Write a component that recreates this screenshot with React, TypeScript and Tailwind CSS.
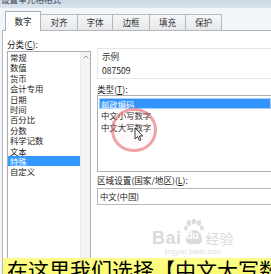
import React from "react";

const font = "font-['Noto_Sans_CJK_SC','Liberation_Sans',sans-serif]";

const categories = [
  "常规",
  "数值",
  "货币",
  "会计专用",
  "日期",
  "时间",
  "百分比",
  "分数",
  "科学记数",
  "文本",
  "特殊",
  "自定义",
];

const tabs = [
  { label: "数字", w: "w-[36px]" },
  { label: "对齐", w: "w-[38px]" },
  { label: "字体", w: "w-[36px]" },
  { label: "边框", w: "w-[38px]" },
  { label: "填充", w: "w-[37px]" },
  { label: "保护", w: "w-[37px]" },
];

function Tabs() {
  return (
    <div className="flex items-end h-[22px] pl-[5px] relative z-10">
      {tabs.map((t, i) =>
        i === 0 ? (
          <div
            key={t.label}
            className={`${t.w} h-[20px] -mb-px bg-white border border-b-0 border-[#a9b0b8] flex items-center justify-center text-[8.6px] text-[#222] pb-[1px]`}
          >
            {t.label}
          </div>
        ) : (
          <div
            key={t.label}
            className={`${t.w} -ml-px h-[16px] bg-gradient-to-b from-[#f6f7f8] to-[#e6e8ea] border border-b-0 border-[#b4b9bf] flex items-center justify-center text-[8.6px] text-[#333]`}
          >
            {t.label}
          </div>
        )
      )}
    </div>
  );
}

function Scrollbar() {
  return (
    <div className="w-[10px] bg-[#f4f4f4] border-l border-[#ececec] flex flex-col items-center justify-between py-[3px]">
      <svg width="6" height="4" viewBox="0 0 6 4">
        <path d="M0.5 3.5 L3 1 L5.5 3.5" fill="none" stroke="#9a9a9a" strokeWidth="1" />
      </svg>
      <svg width="6" height="4" viewBox="0 0 6 4">
        <path d="M0.5 0.5 L3 3 L5.5 0.5" fill="none" stroke="#9a9a9a" strokeWidth="1" />
      </svg>
    </div>
  );
}

export default function App() {
  return (
    <div className={`relative w-[271px] h-[274px] overflow-hidden bg-[#f2f5f9] ${font}`}>
      {/* title bar */}
      <div className="h-[8px] bg-gradient-to-b from-[#cdd8e5] to-[#dbe3ed] overflow-hidden">
        <div className="text-[8.6px] leading-[9px] -mt-[5px] pl-[1px] text-[#3b4656]">设置单元格格式</div>
      </div>

      <Tabs />

      {/* panel */}
      <div className="ml-[2px] h-[260px] bg-white border-l border-t border-[#b3b8be] flex">
        {/* left column */}
        <div className="pl-[4px] w-[88px] flex flex-col">
          <div className="mt-[8px] h-[10px] text-[8.6px] leading-[10px] text-[#222]">
            分类(<span className="underline">C</span>):
          </div>
          <div className="mt-[2px] h-[230px] border border-[#a9adb3] flex">
            <div className="flex-1 flex flex-col">
              {categories.map((c) => (
                <div
                  key={c}
                  className={`h-[10.4px] leading-[10.4px] text-[8.4px] pl-[2px] whitespace-nowrap ${
                    c === "特殊" ? "bg-[#3399ff] text-white" : "text-[#1e1e1e]"
                  }`}
                >
                  {c}
                </div>
              ))}
            </div>
            <Scrollbar />
          </div>
        </div>

        {/* right column */}
        <div className="ml-[6px] flex-1 flex flex-col">
          <div className="mt-[17px] h-[31px] border border-r-0 border-[#e6e6e6] pl-[4px] pt-[2px]">
            <div className="text-[8.6px] leading-[10px] text-[#333]">示例</div>
            <div className="mt-[4px] text-[8.6px] leading-[10px] text-[#222]">087509</div>
          </div>
          <div className="mt-[5px] text-[8.6px] leading-[10px] text-[#222]">
            类型(<span className="underline">T</span>):
          </div>
          <div className="mt-px h-[77px] border border-r-0 border-[#abadb3] pt-[2px] pl-[1px]">
            <div className="h-[11px] leading-[10px] text-[8.4px] text-white bg-[#3394fb] border border-[#a6d0fb] pl-px">
              邮政编码
            </div>
            <div className="h-[12px] leading-[12px] text-[8.4px] text-[#1e1e1e] pl-[2px]">中文小写数字</div>
            <div className="h-[12px] leading-[12px] text-[8.4px] text-[#1e1e1e] pl-[2px]">中文大写数字</div>
          </div>
          <div className="mt-[3px] text-[8.6px] leading-[10px] text-[#222] whitespace-nowrap">
            区域设置(国家/地区)(<span className="underline">L</span>):
          </div>
          <div className="mt-[3px] h-[17px] border border-r-0 border-[#b8b8b8] pl-[2px] flex items-center text-[8.4px] text-[#1e1e1e]">
            中文(中国)
          </div>
        </div>
      </div>

      {/* red circle highlight */}
      <div className="absolute left-[111px] top-[108px] w-[46px] h-[44px] rounded-full border-[3px] border-[rgba(222,92,92,0.55)] bg-[rgba(255,200,200,0.08)]" />

      {/* cursor */}
      <svg className="absolute left-[134px] top-[127px]" width="10" height="15" viewBox="0 0 10 15">
        <path d="M1 1 L1 12 L3.6 9.6 L5.4 13.6 L7 12.9 L5.3 9 L8.8 9 Z" fill="white" stroke="#222" strokeWidth="0.9" strokeLinejoin="round" />
      </svg>

      {/* baidu watermark */}
      <div className="absolute left-[152px] top-[218px] flex flex-col items-center text-[#dadada]">
        <div className="flex items-end">
          <span className="text-[18px] leading-[16px] font-bold font-['Liberation_Sans',sans-serif] tracking-[0.5px]">Bai</span>
          <div className="relative w-[22px] h-[28px] ml-[1px]">
            <svg className="absolute left-0 top-0" width="22" height="28" viewBox="0 0 22 28">
              <ellipse cx="6" cy="5" rx="2.2" ry="3" fill="#dcdcdc" />
              <ellipse cx="11" cy="3.5" rx="2.2" ry="3" fill="#dcdcdc" />
              <ellipse cx="16" cy="5" rx="2.2" ry="3" fill="#dcdcdc" />
              <ellipse cx="3" cy="10" rx="2" ry="2.6" fill="#dcdcdc" />
              <ellipse cx="19" cy="10" rx="2" ry="2.6" fill="#dcdcdc" />
              <path d="M3 22 C3 15 7 12 11 12 C15 12 19 15 19 22 C19 26 15 27 11 26 C7 27 3 26 3 22 Z" fill="#dcdcdc" />
            </svg>
            <span className="absolute left-[4px] top-[13px] text-[10px] leading-[10px] font-bold text-white font-['Liberation_Sans',sans-serif]">du</span>
          </div>
          <span className="text-[14px] leading-[16px] ml-[1px]">经验</span>
        </div>
        <div className="mt-[2px] text-[7px] leading-[8px] font-['Liberation_Sans',sans-serif] text-[#e0e0e0]">jingyan.baidu.com</div>
      </div>

      {/* subtitle */}
      <div className="absolute left-[3px] right-0 top-[258px] h-[30px] bg-gradient-to-b from-[#fdfd8a] to-[#f8f85a] pl-[4px] text-[21px] leading-[21px] text-black whitespace-nowrap pt-[1px]">
        在这里我们选择【中文大写数字】
      </div>
    </div>
  );
}
